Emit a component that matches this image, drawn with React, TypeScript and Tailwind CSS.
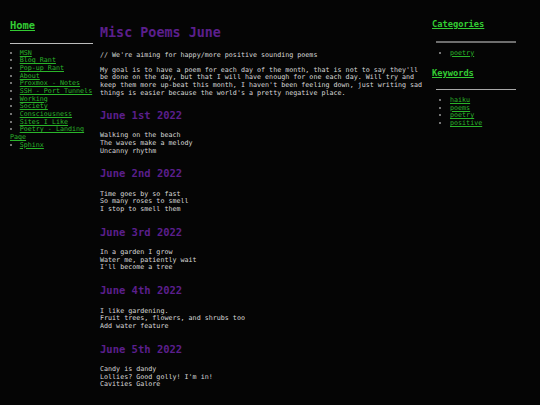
const navLinks = [
  "MSN",
  "Blog Rant",
  "Pop-up Rant",
  "About",
  "Proxmox - Notes",
  "SSH - Port Tunnels",
  "Working",
  "Society",
  "Consciousness",
  "Sites I Like",
  "Poetry - Landing Page",
  "Sphinx",
];

const poems = [
  { title: "June 1st 2022", lines: ["Walking on the beach", "The waves make a melody", "Uncanny rhythm"] },
  { title: "June 2nd 2022", lines: ["Time goes by so fast", "So many roses to smell", "I stop to smell them"] },
  { title: "June 3rd 2022", lines: ["In a garden I grow", "Water me, patiently wait", "I'll become a tree"] },
  { title: "June 4th 2022", lines: ["I like gardening.", "Fruit trees, flowers, and shrubs too", "Add water feature"] },
  { title: "June 5th 2022", lines: ["Candy is dandy", "Lollies? Good golly! I'm in!", "Cavities Galore"] },
];

const keywords = ["haiku", "poems", "poetry", "positive"];

export default function App() {
  return (
    <div className="flex h-[405px] w-[540px] overflow-hidden bg-[#050505] pl-[10px] font-['DejaVu_Sans_Mono',monospace] text-[6.7px] leading-[7.67px] text-[#d8d8d8] antialiased">
      <aside className="w-[83px] shrink-0 pt-[19px]">
        <a className="block text-[10.4px] font-bold leading-[12px] text-[#33cc33] underline">Home</a>
        <hr className="mt-[11.5px] border-t border-[#bdbdbd]" />
        <ul className="mt-[6.2px] list-inside list-disc marker:text-[#9a9a9a]">
          {navLinks.map((link) => (
            <li key={link}>
              <a className="text-[#2ab52a] underline">{link}</a>
            </li>
          ))}
        </ul>
      </aside>

      <main className="ml-[7px] w-[326px] shrink-0 pt-[25px]">
        <h1 className="text-[13.4px] font-bold leading-[16px] text-[#5b1f8c]">Misc Poems June</h1>
        <p className="mt-[11px]">// We're aiming for happy/more positive sounding poems</p>
        <p className="mt-[6.9px]">
          My goal is to have a poem for each day of the month, that is not to say they'll be done on the day, but
          that I will have enough for one each day. Will try and keep them more up-beat this month, I haven't been
          feeling down, just writing sad things is easier because the world's a pretty negative place.
        </p>
        {poems.map((poem, i) => (
          <section key={poem.title} className={i === 0 ? "mt-[11.7px]" : "mt-[12px]"}>
            <h2 className="text-[10.5px] font-bold leading-[13px] text-[#5b1f8c]">{poem.title}</h2>
            <div className="mt-[10.4px]">
              {poem.lines.map((line) => (
                <div key={line}>{line}</div>
              ))}
            </div>
          </section>
        ))}
      </main>

      <aside className="ml-[6px] w-[88px] shrink-0 pt-[19px]">
        <h3 className="text-[8.7px] font-bold leading-[10px] text-[#33cc33] underline">Categories</h3>
        <hr className="mx-[4px] mt-[11.5px] border-t-2 border-[#6e6e6e]" />
        <ul className="mt-[7.2px] list-disc pl-[18px] marker:text-[#9a9a9a]">
          <li>
            <a className="text-[#2ab52a] underline">poetry</a>
          </li>
        </ul>
        <h3 className="mt-[10.2px] text-[8.7px] font-bold leading-[10px] text-[#33cc33] underline">Keywords</h3>
        <hr className="mx-[4px] mt-[11.5px] border-t border-[#a8a8a8]" />
        <ul className="mt-[7px] list-disc pl-[18px] marker:text-[#9a9a9a]">
          {keywords.map((k) => (
            <li key={k}>
              <a className="text-[#2ab52a] underline">{k}</a>
            </li>
          ))}
        </ul>
      </aside>
    </div>
  );
}
